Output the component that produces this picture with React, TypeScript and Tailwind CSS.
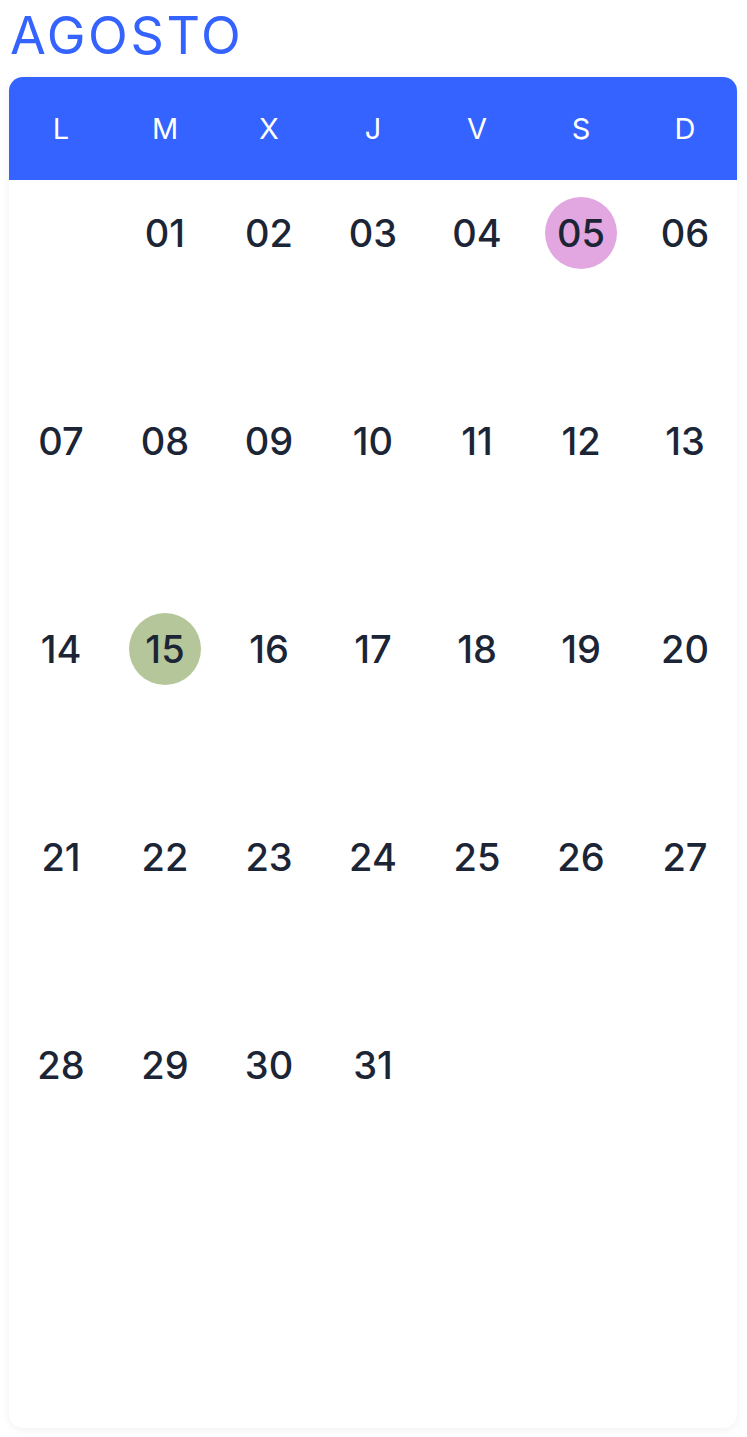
import React from "react"

const DAYS = ["L", "M", "X", "J", "V", "S", "D"]

// highlighted dates
const MARKS: Record<number, string> = {
  5: "bg-[#e2a6e0]",
  15: "bg-[#b5c79a]",
}

// August starts on Tuesday, 6 rows
const cells: (number | null)[] = [
  null,
  ...Array.from({ length: 31 }, (_, i) => i + 1),
]
while (cells.length < 42) cells.push(null)

export default function App() {
  return (
    <div
      className="min-h-[1437px] w-[747px] bg-white px-[9px] pt-[6px]"
      style={{ fontFamily: "Inter, 'Noto Sans', sans-serif" }}
    >
      <h1 className="pl-px text-[52px] leading-[60px] tracking-[0.05em] text-[#3563ff]">AGOSTO</h1>
      <div className="mt-[11px] w-[728px] overflow-hidden rounded-[14px] bg-white shadow-[0_2px_10px_rgba(0,0,0,0.06)]">
        <div className="grid h-[103px] grid-cols-7 items-center bg-[#3563ff] pt-px">
          {DAYS.map((d) => (
            <div key={d} className="text-center text-[29px] text-white">
              {d}
            </div>
          ))}
        </div>
        <div className="grid grid-cols-7">
          {cells.map((n, i) => (
            <div key={i} className="flex h-[208px] justify-center pt-[17px]">
              {n !== null && (
                <div
                  className={`flex h-[72px] w-[72px] items-center justify-center rounded-full text-[38px] font-medium text-[#1b2535] ${MARKS[n] ?? ""}`}
                >
                  {String(n).padStart(2, "0")}
                </div>
              )}
            </div>
          ))}
        </div>
      </div>
    </div>
  )
}
